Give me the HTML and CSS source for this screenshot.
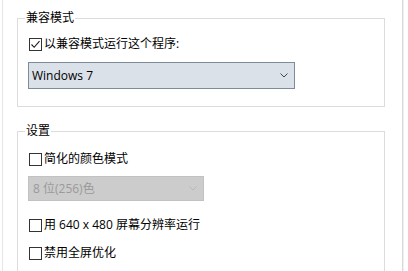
FILE: index.html
```html
<!DOCTYPE html>
<html lang="zh-CN">
<head>
<meta charset="utf-8">
<link rel="stylesheet" href="styles.css">
</head>
<body>
<div class="page">
  <fieldset class="group g1">
    <legend>兼容模式</legend>
    <label class="check">
      <span class="box"><svg width="11" height="11" viewBox="0 0 11 11"><path d="M1.5 5.5 L4.2 8.3 L9.5 2.2" fill="none" stroke="#1a1a1a" stroke-width="1.1"/></svg></span>
      <span class="label">以兼容模式运行这个程序:</span>
    </label>
    <div class="combo">
      <span class="value">Windows 7</span>
      <svg class="chev" width="8" height="5" viewBox="0 0 8 5"><path d="M0.5 0.5 L4 4 L7.5 0.5" fill="none" stroke="#444" stroke-width="1"/></svg>
    </div>
  </fieldset>
  <fieldset class="group g2">
    <legend>设置</legend>
    <label class="check first">
      <span class="box"></span>
      <span class="label">简化的颜色模式</span>
    </label>
    <div class="combo disabled">
      <span class="value">8 位(256)色</span>
      <svg class="chev" width="8" height="5" viewBox="0 0 8 5"><path d="M0.5 0.5 L4 4 L7.5 0.5" fill="none" stroke="#b8b8b8" stroke-width="1"/></svg>
    </div>
    <label class="check res">
      <span class="box"></span>
      <span class="label">用 640 x 480 屏幕分辨率运行</span>
    </label>
    <label class="check last">
      <span class="box"></span>
      <span class="label">禁用全屏优化</span>
    </label>
  </fieldset>
</div>
</body>
</html>
```
FILE: styles.css
```css
html, body {
  margin: 0;
  padding: 0;
  background: #ffffff;
  height: 100%;
  overflow: hidden;
}

body {
  font-family: "Open Sans", "Noto Sans CJK SC", sans-serif;
  font-size: 12px;
  color: #000;
}

.page {
  box-sizing: border-box;
  margin-left: 2px;
  width: 401px;
  height: 100%;
  border-left: 1px solid #e6e6e6;
  border-right: 1px solid #d9d9d9;
  box-shadow: 1px 0 0 #efefef;
  padding: 10px 17px 0 14px;
  display: flex;
  flex-direction: column;
}

.group {
  margin: 0;
  border: 1px solid #dcdcdc;
  min-width: 0;
  display: flex;
  flex-direction: column;
  align-items: flex-start;
}

.group legend {
  font-size: 12px;
  line-height: 16px;
  height: 16px;
  padding: 0 1px;
  margin-left: -4px;
}

.g1 {
  padding: 9px 10px 17px 11px;
}

.g2 {
  margin-top: 16px;
  padding: 11px 10px 9px 11px;
}

.check {
  display: flex;
  align-items: center;
  height: 18px;
  gap: 2px;
  line-height: 18px;
  white-space: nowrap;
}

.box {
  box-sizing: border-box;
  width: 13px;
  height: 13px;
  border: 1px solid #333333;
  background: #fff;
  display: flex;
  align-items: center;
  justify-content: center;
}

.combo {
  box-sizing: border-box;
  margin-top: 9px;
  margin-left: -1px;
  width: 267px;
  height: 27px;
  border: 1px solid #7d8b9b;
  background: #dbe1e9;
  display: flex;
  align-items: center;
  justify-content: space-between;
  padding: 0 6px 0 3px;
}

.combo .value {
  line-height: 16px;
}

.combo.disabled {
  margin-top: 8px;
  width: 176px;
  height: 25px;
  border-color: #c2c2c2;
  background: #cccccc;
  color: #9a9a9a;
  padding-left: 4px;
}

.check.res {
  margin-top: 15px;
}

.check.last {
  margin-top: 10px;
}
```
